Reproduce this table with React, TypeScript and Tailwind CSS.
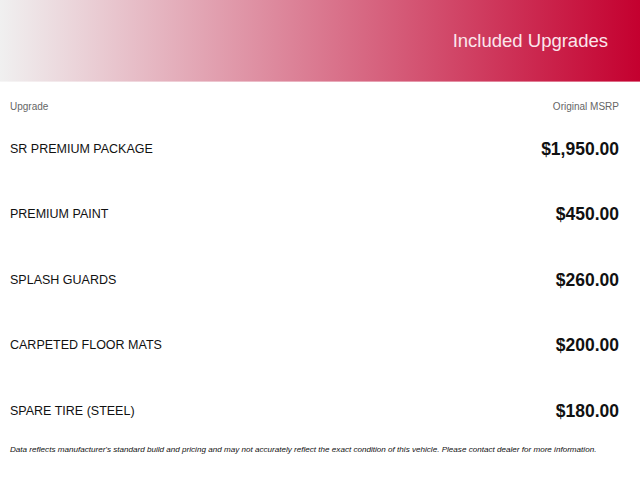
import React from "react";

const rows = [
  { name: "SR PREMIUM PACKAGE", price: "$1,950.00" },
  { name: "PREMIUM PAINT", price: "$450.00" },
  { name: "SPLASH GUARDS", price: "$260.00" },
  { name: "CARPETED FLOOR MATS", price: "$200.00" },
  { name: "SPARE TIRE (STEEL)", price: "$180.00" },
];

export default function App() {
  return (
    <div className="w-[640px] h-[480px] bg-white overflow-hidden" style={{ fontFamily: '"Liberation Sans", Arial, sans-serif' }}>
      <div className="h-[82px] bg-[linear-gradient(to_right,#f0f0f0,#c4002f)] flex flex-col">
        <div className="flex-1 flex items-center justify-end pr-[32px] pt-[1px]">
          <h1 className="text-[18.5px] text-[#fbe6ec] font-normal leading-none">Included Upgrades</h1>
        </div>
        <div className="h-[1px] bg-white/40"></div>
      </div>
      <div className="px-[10px] pr-[21px]">
        <div className="h-[49px] flex items-center justify-between text-[10px] text-[#666]">
          <span>Upgrade</span>
          <span>Original MSRP</span>
        </div>
        <div className="flex flex-col gap-[29.5px]">
          {rows.map((r) => (
            <div key={r.name} className="h-[36px] flex items-center justify-between text-[#111]">
              <span className="text-[12.5px]">{r.name}</span>
              <span className="text-[17.5px] font-bold">{r.price}</span>
            </div>
          ))}
        </div>
        <p className="mt-[15px] text-[8.1px] italic text-[#111] leading-[12px]">
          Data reflects manufacturer's standard build and pricing and may not accurately reflect the exact condition of this vehicle. Please contact dealer for more information.
        </p>
      </div>
    </div>
  );
}
